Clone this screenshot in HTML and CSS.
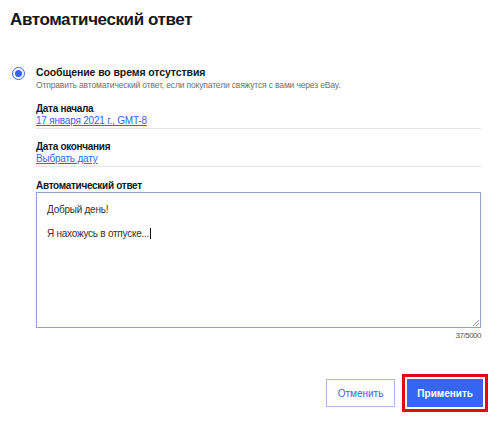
FILE: index.html
```html
<!DOCTYPE html>
<html lang="ru">
<head>
<meta charset="utf-8">
<title>Автоматический ответ</title>
<link rel="stylesheet" href="styles.css">
</head>
<body>
<div class="page">
  <h1 class="title">Автоматический ответ</h1>

  <div class="option">
    <span class="radio"><span class="radio-dot"></span></span>
    <div class="option-body">
      <div class="option-title">Сообщение во время отсутствия</div>
      <div class="option-sub">Отправить автоматический ответ, если покупатели свяжутся с вами через eBay.</div>

      <div class="field field-first">
        <div class="label">Дата начала</div>
        <a class="link" href="#">17 января 2021 г., GMT-8</a>
      </div>
      <div class="sep"></div>

      <div class="field">
        <div class="label">Дата окончания</div>
        <a class="link" href="#">Выбрать дату</a>
      </div>
      <div class="sep"></div>

      <div class="field field-reply">
        <div class="label">Автоматический ответ</div>
        <div class="textarea">
          <div class="ta-line">Добрый день!</div>
          <div class="ta-line">&nbsp;</div>
          <div class="ta-line">Я нахожусь в отпуске...<span class="caret"></span></div>
          <svg class="grip" width="9" height="9" viewBox="0 0 9 9"><path d="M8 2L2 8M8 5L5 8" stroke="#9a9a9a" stroke-width="1" fill="none"/></svg>
        </div>
        <div class="counter">37/5000</div>
      </div>
    </div>
  </div>

  <div class="actions">
    <button class="btn btn-secondary">Отменить</button>
    <button class="btn btn-primary">Применить</button>
  </div>
</div>
</body>
</html>
```

FILE: styles.css
```css
* { box-sizing: border-box; }

html, body {
  margin: 0;
  padding: 0;
  background: #ffffff;
}

body {
  font-family: "Liberation Sans", Arial, Helvetica, sans-serif;
  color: #111820;
}

.page {
  width: 500px;
  height: 421px;
  padding: 9px 0 0 10px;
}

.title {
  margin: 0;
  font-size: 17px;
  line-height: 22px;
  font-weight: bold;
  letter-spacing: -0.4px;
  color: #111820;
}

.option {
  display: flex;
  margin-top: 34px;
}

.radio {
  flex: none;
  width: 13px;
  height: 13px;
  margin: 2px 11px 0 2px;
  border: 1.5px solid #3665f3;
  border-radius: 50%;
  display: flex;
  align-items: center;
  justify-content: center;
}

.radio-dot {
  width: 7px;
  height: 7px;
  border-radius: 50%;
  background: #3665f3;
}

.option-body {
  width: 445px;
}

.option-title {
  font-size: 10.5px;
  line-height: 14px;
  font-weight: bold;
  letter-spacing: -0.1px;
}

.option-sub {
  font-size: 8.5px;
  line-height: 12px;
  letter-spacing: -0.15px;
  color: #707070;
}

.field {
  display: flex;
  flex-direction: column;
  margin-top: 12px;
}

.label {
  font-size: 10px;
  line-height: 12px;
  font-weight: bold;
  letter-spacing: -0.3px;
  color: #111820;
}

.link {
  font-size: 10px;
  line-height: 12px;
  letter-spacing: -0.2px;
  color: #3665f3;
  text-decoration: underline;
  align-self: flex-start;
}

.sep {
  height: 1px;
  margin-top: 1px;
  background: #e5e5e5;
}

.field-reply {
  margin-top: 13px;
}

.textarea {
  position: relative;
  height: 136px;
  border: 1px solid #8ea3cc;
  padding: 11px 10px;
  font-size: 10px;
  line-height: 12px;
  letter-spacing: -0.25px;
  color: #333333;
}

.caret {
  display: inline-block;
  width: 1px;
  height: 11px;
  background: #111111;
  vertical-align: -2px;
  margin-left: 1px;
}

.grip {
  position: absolute;
  right: 0;
  bottom: 0;
}

.counter {
  margin-top: 2px;
  font-size: 8px;
  line-height: 12px;
  letter-spacing: -0.5px;
  color: #555555;
  text-align: right;
}

.actions {
  display: flex;
  justify-content: flex-end;
  gap: 12px;
  margin-top: 37px;
  padding-right: 17px;
}

.btn {
  height: 28px;
  font-family: "Liberation Sans", Arial, Helvetica, sans-serif;
  font-size: 10px;
  border-radius: 0;
  cursor: pointer;
}

.btn-secondary {
  padding: 0 11px;
  background: #ffffff;
  border: 1px solid #a9b9e6;
  color: #3665f3;
}

.btn-primary {
  padding: 0 9px;
  background: #3665f3;
  border: 1px solid #3665f3;
  color: #ffffff;
  font-weight: bold;
  outline: 3px solid #e30613;
  outline-offset: 2px;
}
```
